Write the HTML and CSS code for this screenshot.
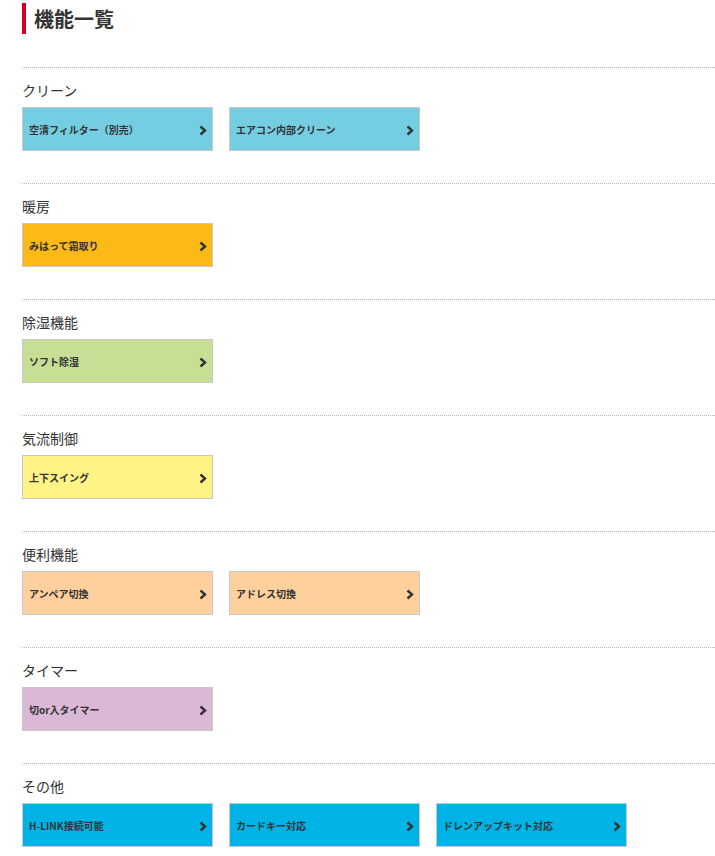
FILE: index.html
```html
<!DOCTYPE html>
<html lang="ja">
<head>
<meta charset="utf-8">
<title>機能一覧</title>
<link rel="stylesheet" href="styles.css">
</head>
<body>
<div class="page">
  <h2 class="title">機能一覧</h2>

  <section class="group">
    <h3 class="group-label">クリーン</h3>
    <div class="btns">
      <a class="btn c-cyan" href="#"><span>空清フィルター（別売）</span><svg class="chev" viewBox="0 0 8 11"><polyline points="1.5,1.5 6,5.5 1.5,9.5"/></svg></a>
      <a class="btn c-cyan" href="#"><span>エアコン内部クリーン</span><svg class="chev" viewBox="0 0 8 11"><polyline points="1.5,1.5 6,5.5 1.5,9.5"/></svg></a>
    </div>
  </section>

  <section class="group">
    <h3 class="group-label">暖房</h3>
    <div class="btns">
      <a class="btn c-orange" href="#"><span>みはって霜取り</span><svg class="chev" viewBox="0 0 8 11"><polyline points="1.5,1.5 6,5.5 1.5,9.5"/></svg></a>
    </div>
  </section>

  <section class="group">
    <h3 class="group-label">除湿機能</h3>
    <div class="btns">
      <a class="btn c-green" href="#"><span>ソフト除湿</span><svg class="chev" viewBox="0 0 8 11"><polyline points="1.5,1.5 6,5.5 1.5,9.5"/></svg></a>
    </div>
  </section>

  <section class="group">
    <h3 class="group-label">気流制御</h3>
    <div class="btns">
      <a class="btn c-yellow" href="#"><span>上下スイング</span><svg class="chev" viewBox="0 0 8 11"><polyline points="1.5,1.5 6,5.5 1.5,9.5"/></svg></a>
    </div>
  </section>

  <section class="group">
    <h3 class="group-label">便利機能</h3>
    <div class="btns">
      <a class="btn c-peach" href="#"><span>アンペア切換</span><svg class="chev" viewBox="0 0 8 11"><polyline points="1.5,1.5 6,5.5 1.5,9.5"/></svg></a>
      <a class="btn c-peach" href="#"><span>アドレス切換</span><svg class="chev" viewBox="0 0 8 11"><polyline points="1.5,1.5 6,5.5 1.5,9.5"/></svg></a>
    </div>
  </section>

  <section class="group">
    <h3 class="group-label">タイマー</h3>
    <div class="btns">
      <a class="btn c-pink" href="#"><span>切or入タイマー</span><svg class="chev" viewBox="0 0 8 11"><polyline points="1.5,1.5 6,5.5 1.5,9.5"/></svg></a>
    </div>
  </section>

  <section class="group">
    <h3 class="group-label">その他</h3>
    <div class="btns">
      <a class="btn c-blue" href="#"><span>H-LINK接続可能</span><svg class="chev" viewBox="0 0 8 11"><polyline points="1.5,1.5 6,5.5 1.5,9.5"/></svg></a>
      <a class="btn c-blue" href="#"><span>カードキー対応</span><svg class="chev" viewBox="0 0 8 11"><polyline points="1.5,1.5 6,5.5 1.5,9.5"/></svg></a>
      <a class="btn c-blue" href="#"><span>ドレンアップキット対応</span><svg class="chev" viewBox="0 0 8 11"><polyline points="1.5,1.5 6,5.5 1.5,9.5"/></svg></a>
    </div>
  </section>
</div>
</body>
</html>
```

FILE: styles.css
```css
html, body {
  margin: 0;
  padding: 0;
  background: #fff;
}
body {
  font-family: "Noto Sans CJK JP", "Noto Sans", "Liberation Sans", sans-serif;
  color: #333;
}
.page {
  padding-left: 22px;
}
.title {
  margin: 3px 0 33px 0;
  height: 31px;
  border-left: 4px solid #d7001a;
  padding-left: 8px;
  font-size: 20px;
  line-height: 31px;
  font-weight: bold;
  color: #333;
  box-sizing: border-box;
}
.group {
  border-top: 1px dotted #b5b5b5;
  padding: 12px 0 32px 0;
}
.group-label {
  margin: 0 0 7px 0;
  font-size: 14px;
  line-height: 20px;
  font-weight: normal;
  color: #333;
}
.btns {
  display: flex;
  gap: 16px;
}
.btn {
  width: 191px;
  height: 44px;
  box-sizing: border-box;
  border: 1px solid #c9c9c9;
  display: flex;
  align-items: center;
  justify-content: space-between;
  padding: 0 5px 0 6px;
  text-decoration: none;
  color: #333;
  font-size: 10px;
  font-weight: bold;
}
.chev {
  width: 8px;
  height: 11px;
  margin-top: 2px;
  fill: none;
  stroke: #333;
  stroke-width: 2.4;
}
.c-cyan { background: #75cde1; }
.c-orange { background: #fdb915; }
.c-green { background: #c6df95; }
.c-yellow { background: #fff385; }
.c-peach { background: #fed09e; }
.c-pink { background: #dcb8d7; }
.c-blue { background: #00b3e6; }
```
